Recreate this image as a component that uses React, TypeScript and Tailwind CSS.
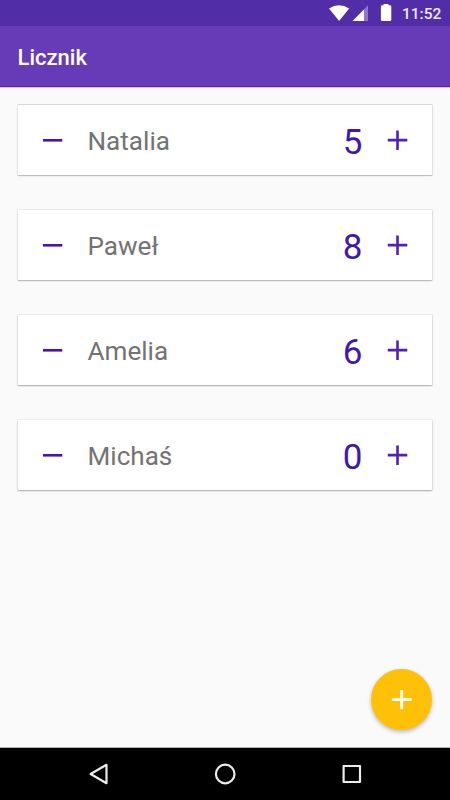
// App.tsx - Counter list screen: one card per person with minus / plus controls.
import { useState } from "react";

const initialCounters = [
  { name: "Natalia", value: 5, shadow: "shadow-[0_0_0_1px_rgba(0,0,0,0.06),0_-1px_0_rgba(0,0,0,0.08),0_1px_0_rgba(0,0,0,0.1),0_1px_2px_rgba(0,0,0,0.14)]" },
  { name: "Paweł", value: 8, shadow: "shadow-[0_0_0_1px_rgba(0,0,0,0.06),0_1px_0_rgba(0,0,0,0.1),0_1px_2px_rgba(0,0,0,0.16)]" },
  { name: "Amelia", value: 6, shadow: "shadow-[0_0_0_1px_rgba(0,0,0,0.05),0_1px_0_rgba(0,0,0,0.1),0_1px_2px_rgba(0,0,0,0.2)]" },
  { name: "Michaś", value: 0, shadow: "shadow-[0_0_0_1px_rgba(0,0,0,0.04),0_1px_0_rgba(0,0,0,0.1),0_1px_2px_rgba(0,0,0,0.22)]" },
];

function StatusBar() {
  return (
    <div className="flex h-[26px] shrink-0 items-center justify-end bg-[#512da8] pr-[9px] text-white">
      <svg className="h-[26px] w-[64px]" viewBox="328 0 64 26" fill="currentColor" aria-hidden="true">
        <path d="M329 8.5 Q339 1.8 349.2 8.5 L339.1 21 Z" />
        <path d="M368 5.3 V21 H352.6 Z" opacity="0.35" />
        <path d="M364 9.4 V21 H352.6 Z" />
        <path d="M383.5 4 H388.5 V5.3 H390 Q391.3 5.3 391.3 6.6 V19.7 Q391.3 21 390 21 H382.2 Q380.9 21 380.9 19.7 V6.6 Q380.9 5.3 382.2 5.3 H383.5 Z" />
      </svg>
      <span className="mt-[4px] ml-[10px] w-[39px] text-[15.5px] leading-none font-medium whitespace-nowrap text-white/90">11:52</span>
    </div>
  );
}

function CounterCard({ name, value, shadow, onChange }: {
  name: string;
  value: number;
  shadow: string;
  onChange: (step: number) => void;
}) {
  return (
    <li className={`flex h-[70px] items-center bg-white ${shadow}`}>
      <button className="flex h-full w-[70px] items-center justify-center" aria-label="-" onClick={() => onChange(-1)}>
        <svg className="h-[70px] w-[70px]" viewBox="0 0 70 70" fill="#4a12b4" aria-hidden="true">
          <path d="M25 34 H44.3 V36.6 H25 Z" />
        </svg>
      </button>
      <span className="mt-[3px] -ml-[0.5px] flex-1 text-[26.1px] leading-none text-[#737373]">{name}</span>
      <span className="mt-[5px] mr-[0.5px] w-[36px] text-center text-[35px] leading-none text-[#4119a6]">{value}</span>
      <button className="flex h-full w-[61px] items-center" aria-label="+" onClick={() => onChange(1)}>
        <svg className="h-[70px] w-[61px]" viewBox="371 0 61 70" fill="#5120b4" aria-hidden="true">
          <path d="M396.2 25.5 H398.8 V33.8 H407.3 V36.4 H398.8 V45 H396.2 V36.4 H387.8 V33.8 H396.2 Z" />
        </svg>
      </button>
    </li>
  );
}

function NavBar() {
  return (
    <nav className="flex h-[52px] shrink-0 items-center justify-center bg-black shadow-[0_-1px_0_#b5b5b5]">
      <svg className="h-[52px] w-[320px]" viewBox="65 748 320 52" fill="none" stroke="#ececec" strokeWidth="2.2" strokeLinejoin="round" aria-hidden="true">
        <path d="M90.6 774 L106.5 764.8 V783.2 Z" />
        <circle cx="225.2" cy="774" r="9.3" />
        <path d="M343.6 766 H360 V782 H343.6 Z" />
      </svg>
    </nav>
  );
}

export default function App() {
  const [counters, setCounters] = useState(initialCounters);

  const change = (name: string, step: number) =>
    setCounters((list) => list.map((c) => (c.name === name ? { ...c, value: c.value + step } : c)));

  return (
    <div className="flex h-[800px] w-[450px] flex-col overflow-hidden bg-[#fafafa] font-['Roboto',sans-serif]">
      <StatusBar />
      <header className="flex h-[61px] shrink-0 items-center border-b border-[#5a1cb5] bg-[#673ab7] pl-[17.5px] text-white shadow-[0_1px_0_#d6c8ee]">
        <h1 className="mt-[3px] text-[22px] leading-none font-medium">Licznik</h1>
      </header>

      <main className="relative flex-1 px-[18px] pt-[18px]">
        <ul className="flex flex-col gap-[35px]">
          {counters.map((c) => (
            <CounterCard key={c.name} {...c} onChange={(step) => change(c.name, step)} />
          ))}
        </ul>

        <button
          className="absolute right-[18px] bottom-[18px] h-[61px] w-[61px] rounded-full bg-[#ffc107] shadow-[0_2px_4px_rgba(0,0,0,0.26)]"
          aria-label="Add"
        >
          <svg className="h-[61px] w-[61px]" viewBox="0 0 61 61" fill="white" aria-hidden="true">
            <path d="M29.3 21 H32.2 V29.2 H40.7 V32.1 H32.2 V40.3 H29.3 V32.1 H20.9 V29.2 H29.3 Z" />
          </svg>
        </button>
      </main>

      <NavBar />
    </div>
  );
}
